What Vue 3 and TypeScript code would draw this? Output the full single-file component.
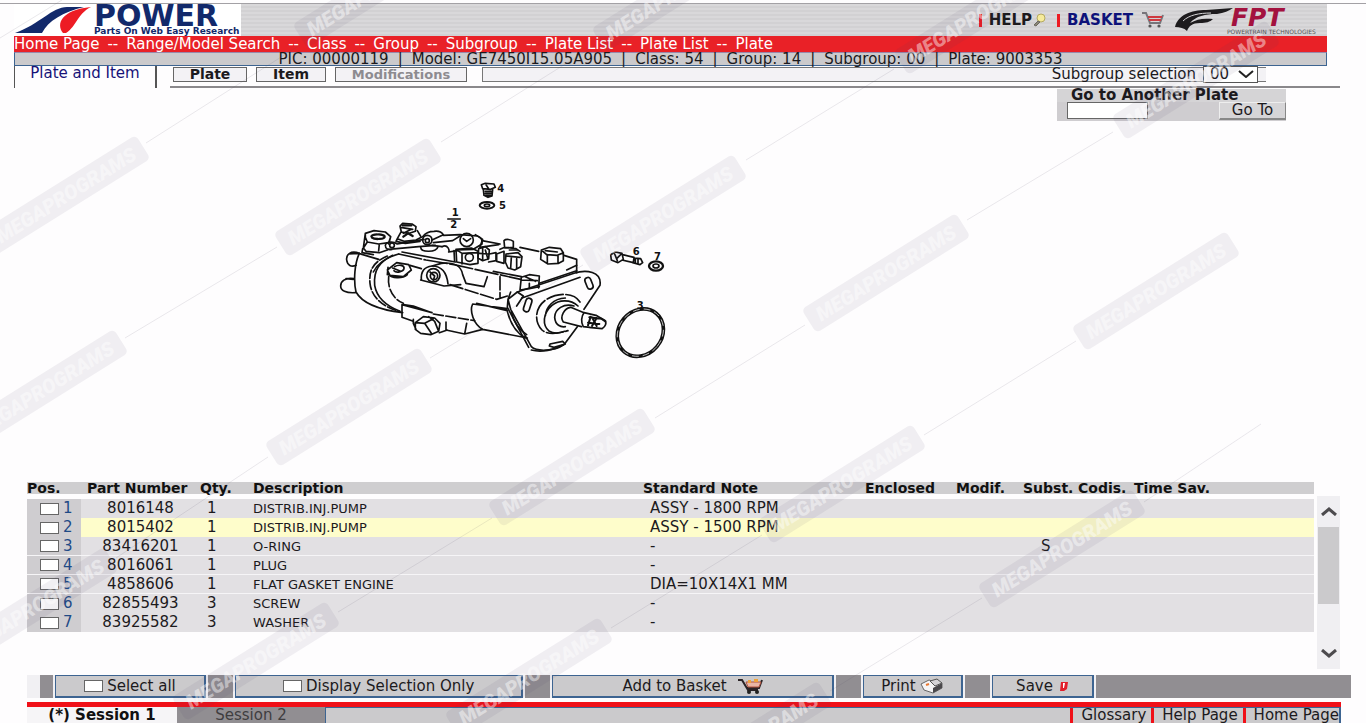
<script setup lang="ts">
import { ref } from 'vue'

interface Part {
  pos: number
  number: string
  qty: number
  description: string
  note: string
  subst: string
  selected: boolean
}

const crumbs = ['Home Page', 'Range/Model Search', 'Class', 'Group', 'Subgroup', 'Plate List', 'Plate List', 'Plate']
const info = ['PIC: 00000119', 'Model: GE7450I15.05A905', 'Class: 54', 'Group: 14', 'Subgroup: 00', 'Plate: 9003353']
const headings = ['Pos.', 'Part Number', 'Qty.', 'Description', 'Standard Note', 'Enclosed', 'Modif.', 'Subst.', 'Codis.', 'Time Sav.']

const parts = ref<Part[]>([
  { pos: 1, number: '8016148', qty: 1, description: 'DISTRIB.INJ.PUMP', note: 'ASSY - 1800 RPM', subst: '', selected: false },
  { pos: 2, number: '8015402', qty: 1, description: 'DISTRIB.INJ.PUMP', note: 'ASSY - 1500 RPM', subst: '', selected: false },
  { pos: 3, number: '83416201', qty: 1, description: 'O-RING', note: '-', subst: 'S', selected: false },
  { pos: 4, number: '8016061', qty: 1, description: 'PLUG', note: '-', subst: '', selected: false },
  { pos: 5, number: '4858606', qty: 1, description: 'FLAT GASKET ENGINE', note: 'DIA=10X14X1 MM', subst: '', selected: false },
  { pos: 6, number: '82855493', qty: 3, description: 'SCREW', note: '-', subst: '', selected: false },
  { pos: 7, number: '83925582', qty: 3, description: 'WASHER', note: '-', subst: '', selected: false },
])

const highlighted = ref(2)
const subgroup = ref('00')
const otherPlate = ref('')
const selectAll = ref(false)
const selectionOnly = ref(false)

function toggleAll() {
  parts.value.forEach((p) => (p.selected = selectAll.value))
}

const marks: [number, number][] = [
  [377, -12], [676, -8], [978, 15], [1196, 80],
  [66, 195], [358, 197], [663, 214], [886, 273], [1156, 291],
  [44, 389], [349, 407], [572, 467], [842, 484], [1062, 549],
  [34, 607], [256, 661], [529, 677], [748, 741],
]
const strings: [number, number, number, number][] = [
  [0, 38, 62, 0], [146, 143, 300, 45], [441, 142, 594, 46], [746, 160, 894, 69], [967, 220, 1113, 132],
  [125, 338, 277, 247], [430, 358, 583, 265], [655, 418, 805, 325], [924, 435, 1076, 341], [1144, 502, 1261, 424],
  [116, 558, 268, 457], [338, 612, 492, 518], [611, 628, 762, 535], [830, 691, 982, 598],
]
</script>

<template>
  <div class="page">
    <div class="topline"></div>
    <header class="head">
      <div class="banner">
        <div class="brand">
          <svg class="swoosh" viewBox="0 0 80 32" aria-hidden="true">
            <path d="M1 29C26 20 38 3 53 3h17C49 8 34 17 28 29z" fill="#12296b" />
            <path d="M49 29C42 20 47 6 77 3C63 10 63 22 52 29z" fill="#ed1c24" />
          </svg>
          <div class="wordmark">
            <strong>POWER</strong>
            <span>Parts On Web Easy Research</span>
          </div>
        </div>
        <nav class="quick">
          <a href="#" class="help">HELP</a>
          <svg class="bulb" viewBox="0 0 14 14" aria-hidden="true">
            <circle cx="9" cy="5" r="4" fill="#f6eb9b" stroke="#b5aa62" />
            <path d="M6 8L2 12l2 1 4-4z" fill="#8b8878" stroke="#6b6860" />
          </svg>
          <a href="#" class="basket">BASKET</a>
          <svg class="cart" viewBox="0 0 24 18" aria-hidden="true">
            <path d="M1 2h4l4 10h10l3-8" fill="none" stroke="#77757a" stroke-width="2" />
            <path d="M7 6h14M8 9h12" stroke="#cf3a40" stroke-width="2" />
            <circle cx="9" cy="15" r="1.6" fill="#555" /><circle cx="18" cy="15" r="1.6" fill="#555" />
          </svg>
          <svg class="fpt" viewBox="0 0 148 32" aria-hidden="true">
            <path d="M0 23C3 11 16 6 31 6l27-2c-4 3-9 5-16 6-12 0-21 2-27 9 7-4 13-5 23-4-3 3-7 4-13 4-8 0-11 3-13 8-3-3-7-4-12-4z" fill="#1d1b1d" />
            <path d="M8 17C14 11 24 9 36 9" fill="none" stroke="#d6d5d7" stroke-width="1" />
            <text x="56" y="22" class="fpt-name">FPT</text>
            <text x="52" y="30" class="fpt-sub">POWERTRAIN TECHNOLOGIES</text>
          </svg>
        </nav>
      </div>
      <nav class="crumbs">
        <template v-for="(c, i) in crumbs" :key="i"><span v-if="i">--</span><a href="#">{{ c }}</a></template>
      </nav>
      <div class="info">
        <template v-for="(t, i) in info" :key="t"><span v-if="i">|</span><b>{{ t }}</b></template>
      </div>
    </header>

    <div class="tools">
      <a href="#" class="tab">Plate and Item</a>
      <div class="strip">
        <button type="button" class="plate-btn">Plate</button>
        <button type="button" class="item-btn">Item</button>
        <button type="button" class="mod-btn" disabled>Modifications</button>
        <div class="sub">
          <label for="subgroup">Subgroup selection</label>
          <span class="picker">
            <select id="subgroup" v-model="subgroup"><option>00</option></select>
            <svg viewBox="0 0 16 8" aria-hidden="true"><path d="M1 1l7 6 7-6" fill="none" stroke="#222" stroke-width="2" /></svg>
          </span>
        </div>
      </div>
    </div>

    <main class="stage">
      <svg class="drawing" viewBox="0 0 1080 600" role="img" aria-label="Injection pump exploded view">
        <g fill="none" stroke="#111" stroke-width="5" stroke-linejoin="round" stroke-linecap="round">
          <!-- rear studs and flange -->
          <path d="M118 250C92 240 78 254 80 270s14 22 28 16M86 252l30-2 60 18" />
          <path d="M102 326C74 322 62 334 62 348s16 22 44 20M78 326l22 2" />
          <path d="M118 250C104 280 100 330 108 366c20 36 74 54 140 62" />
          <path d="M202 258C160 276 146 300 150 340c4 40 36 70 88 84" stroke-dasharray="26 7" />
          <path d="M218 256C178 276 160 300 164 346c6 36 36 62 76 78" />
          <path d="M236 252C200 262 172 282 160 306" />
          <path d="M206 320C202 356 220 388 250 400" stroke-dasharray="30 8" />
          <!-- left cap nut -->
          <path d="M136 190l26-8 34 4 16 14-6 18-30 4-34-6-6-14zM136 190l-6 44M212 200l-6 22M142 216l-12 18 8 10 40 4 24-8M128 236l-2 12 34 6M178 222l-2 20" />
          <ellipse cx="174" cy="200" rx="20" ry="7" stroke-dasharray="18 5" stroke-width="7" />
          <!-- top screw -->
          <path d="M240 168l8-8 28 2 12 8-2 14-18 6-24-4zM244 184l-12 22 20 8 36-4 16-8-12-20M242 172l36 6M250 190l24-12M232 206l-4 8 28 6 44-6" />
          <path d="M248 166h26M250 200l14-10 14 8" stroke-width="7" />
          <!-- lever -->
          <path d="M196 226c2-10 22-14 36-4l80-14M206 238l90-8 50-4M196 226c0 12 8 14 20 12" />
          <circle cx="216" cy="226" r="7" /><circle cx="322" cy="210" r="14" /><circle cx="322" cy="212" r="6" />
          <path d="M308 200c10-14 20-16 34-16 14-2 24 4 28 10l-34 16M340 218l58-6 22-14M336 226l30 4" />
          <path d="M302 232c2 16 46 16 52-2M366 230c18-10 24 14 20 16M386 246l26-4" />
          <path d="M370 196l50-2 52 4c12 4 16 14 14 24l-26 16-48 2" />
          <circle cx="440" cy="210" r="20" /><path d="M430 206l10 8 12-8M466 194l22 14-8 22" />
          <!-- body top edge -->
          <path d="M486 212l54 10M480 232l56-8M600 232l56 12M732 256l38 12v40" />
          <path d="M236 252l82 18 84 14 200 44" stroke-dasharray="70 8" />
          <path d="M246 246l160 30M404 276l-2-34M520 304l84 16" />
          <!-- manifold blocks -->
          <path d="M408 238l46-4 20 10v36l-24 4-40-8zM408 238l18 12 46-2M426 250v32" />
          <circle cx="448" cy="262" r="12" /><path d="M476 236l20-6 12 10-2 26-18 6-14-8zM478 250l26 2M488 234v36M508 252l20-4v24l-22 4M496 240l8 28" />
          <path d="M530 252l22-8v36l-22-6zM552 212c6-6 20-4 28 2v18l-26 2zM540 238l14-6 34 4 12 8" />
          <path d="M558 252l36-4 12 12-4 30-18 10-20-6-8-18zM560 258l40 4M574 262l-2 32M590 266v28M568 240h24" />
          <!-- right cap nut -->
          <path d="M664 240l24-8 34 4 8 12-18 8-32-2zM664 240l-2 28 22 14 32-2 14-8v-24M682 254v26M714 256v24" />
          <path d="M676 242l36 4" />
          <!-- side lugs -->
          <path d="M202 300l28-22 36 6 8 16-24 20-40-4zM204 292l-2 22M218 294l24 10M224 290c12-8 30-4 28 6s-24 14-30 6M206 314c8 10 40 14 56 0M270 286l34 10" />
          <path d="M304 330c-2-28 12-40 32-42l28-8c34-4 60 6 64 34l10 26 54 10 10-30" />
          <path d="M302 330l70 18 50-4M336 288c26 0 44 16 48 54" /><circle cx="340" cy="316" r="20" /><circle cx="342" cy="318" r="11" /><path d="M330 306l14 12-4 14" />
          <path d="M540 320v60M390 344l140 44 32-10" stroke-dasharray="40 8" />
          <!-- flange bolt -->
          <path d="M604 322l24-8 30 4-2 36M604 322l-4 38 28-4 30-6M604 330l48 2M616 320l30 14M628 340v14" />
          <path d="M740 300l30-14M658 340l112-38" />
          <!-- front flange -->
          <path d="M564 388l28-22 170-56c36-12 84-6 78 36l-48 72M564 388l8 30 62 112c16 16 70 14 98-6l40-54M564 388l-2 24 64 120M572 366l-8 22M606 384l174-62" />
          <path d="M592 366l18 12-20 30M634 540c30 8 70 0 96-16" />
          <rect x="614" y="384" width="18" height="42" rx="9" transform="rotate(18 623 405)" />
          <rect x="798" y="322" width="18" height="36" rx="9" transform="rotate(-22 807 340)" />
          <path d="M690 522l38-8 8 8-34 10-14-4z" />
          <!-- shaft -->
          <path d="M780 396c-20-32-70-26-100-8-34 22-40 64-14 92 20 18 58 8 78 2" stroke-dasharray="50 8" />
          <path d="M774 408c-24-22-58-18-78-2-28 24-30 60-8 78 14 8 30 6 46 0M736 384c-36 2-58 26-60 54M762 408c-30-10-58 10-58 34 2 24 18 30 32 28" />
          <path d="M792 428l-40-16c-18 2-34 28-22 44l54 14M792 428c-8 10-10 30-2 42l20 2M792 428l36 8 28 16c4 10 0 18-10 24l-40-4" />
          <path d="M808 442l36 4 12 8M804 458l34 4M816 442l14 26M830 444l-14 24M804 466l8-26" stroke-width="6" />
          <!-- lower body -->
          <path d="M246 404l90 24M246 404v38l34 12M250 404l30 4 56 20" />
          <path d="M340 432l124 20" stroke-dasharray="30 8" />
          <path d="M562 416l-104-14c-10 20 2 60 30 76l134 26M470 400l92 22M488 478l-54 14-56-12M378 456v24M440 460l-6 32M358 488l24-8M562 424c10 40 26 64 54 80M574 426c8 32 24 54 46 68" />
          <path d="M286 458l24-18 34 4 16 16-4 24-24 10-30-4-16-12zM286 458l28 2 20 30M314 460l26-14M326 440l18 14 12 30M280 448v12l8 18" />
          <!-- loose hardware -->
          <path d="M484 44l12-4 26 2 4 10-14 6-24-2zM490 58l2 18 12 6 12-4 2-20M496 64h18M496 70h18M496 76h16M498 44l8 12" />
          <ellipse cx="501" cy="106" rx="22" ry="10" stroke-width="6" /><ellipse cx="501" cy="106" rx="8" ry="4" />
          <path d="M872 254l14-8 20 4 4 18-16 10-20-8zM884 252l8 20M904 252l-14 14M908 254l34 8-2 16-34-8M942 264l20 2 6 12-8 6-22-6M946 266v12M954 268v12" />
          <ellipse cx="1008" cy="288" rx="21" ry="14" stroke-width="7" /><ellipse cx="1008" cy="288" rx="9" ry="6" />
          <ellipse cx="961" cy="488" rx="65" ry="75" transform="rotate(40 961 488)" stroke-width="11" />
          <ellipse cx="961" cy="488" rx="65" ry="75" transform="rotate(40 961 488)" stroke="#fff" stroke-width="2" stroke-dasharray="18 14" />
          <path d="M383 147h38" stroke-width="4" />
        </g>
        <g class="callouts">
          <text x="395" y="137">1</text><text x="391" y="174">2</text>
          <text x="532" y="65">4</text><text x="537" y="118">5</text>
          <text x="938" y="256">6</text><text x="1002" y="271">7</text><text x="950" y="416">3</text>
        </g>
      </svg>
      <form class="goto" @submit.prevent>
        <label for="other-plate">Go to Another Plate</label>
        <div class="goto-row">
          <input id="other-plate" v-model="otherPlate" type="text" />
          <button type="submit">Go To</button>
        </div>
      </form>
    </main>

    <section class="list">
      <table>
        <colgroup>
          <col class="c-pos" /><col class="c-num" /><col class="c-qty" /><col class="c-desc" /><col class="c-note" />
          <col class="c-enc" /><col class="c-mod" /><col class="c-sub" /><col class="c-cod" /><col class="c-time" />
        </colgroup>
        <thead>
          <tr><th v-for="h in headings" :key="h" scope="col">{{ h }}</th></tr>
        </thead>
        <tbody>
          <tr v-for="p in parts" :key="p.pos" :class="{ lit: p.pos === highlighted, ruled: p.pos > 2 && p.pos < 6 }">
            <td class="pos">
              <label><input v-model="p.selected" type="checkbox" />{{ p.pos }}</label>
            </td>
            <td class="num">{{ p.number }}</td>
            <td class="qty">{{ p.qty }}</td>
            <td class="desc">{{ p.description }}</td>
            <td class="note">{{ p.note }}</td>
            <td></td>
            <td></td>
            <td class="subst">{{ p.subst }}</td>
            <td></td>
            <td></td>
          </tr>
        </tbody>
      </table>
      <div class="scroll">
        <button type="button" aria-label="Scroll up">
          <svg viewBox="0 0 16 9" aria-hidden="true"><path d="M1 8l7-6 7 6" /></svg>
        </button>
        <div class="track"><div class="thumb"></div></div>
        <button type="button" aria-label="Scroll down">
          <svg viewBox="0 0 16 9" aria-hidden="true"><path d="M1 1l7 6 7-6" /></svg>
        </button>
      </div>
    </section>

    <section class="actions">
      <i class="block first"></i>
      <label class="act w-all"><input v-model="selectAll" type="checkbox" @change="toggleAll" />Select all</label>
      <i class="block"></i>
      <label class="act w-only"><input v-model="selectionOnly" type="checkbox" />Display Selection Only</label>
      <i class="block"></i>
      <button type="button" class="act w-add">
        Add to Basket
        <svg class="basket-icon" viewBox="0 0 26 18" aria-hidden="true">
          <path d="M1 3h4l6 10h10M10 11h12l3-8" fill="none" stroke="#2a2326" stroke-width="2" />
          <path d="M9 5h15l-2 5H11z" fill="#e9b5a5" stroke="#b0523f" />
          <path d="M11 3h3v3h-3zM17 2h4v3h-4z" fill="#f0a33a" />
          <circle cx="12" cy="15" r="2" fill="#222" /><circle cx="20" cy="15" r="2" fill="#222" />
        </svg>
      </button>
      <i class="block"></i>
      <button type="button" class="act w-print">
        Print
        <svg class="print-icon" viewBox="0 0 24 16" aria-hidden="true">
          <path d="M1 6l8-4 6 2 7 1v5l-9 5-9-3z" fill="#f5f4f5" stroke="#666" />
          <path d="M13 10l9-5v5l-9 5z" fill="#4a484b" />
          <path d="M10 3l7-2 5 4-7 3z" fill="#d5d3d6" stroke="#555" />
          <path d="M6 7l3-1" stroke="#e87832" stroke-width="2" />
        </svg>
      </button>
      <i class="block"></i>
      <button type="button" class="act w-save">
        Save
        <svg class="save-icon" viewBox="0 0 10 11" aria-hidden="true">
          <path d="M2 1h7L8 8 5 10H1z" fill="#e21f2b" /><path d="M4 2h2L5 7H4z" fill="#fff" />
        </svg>
      </button>
      <i class="block last"></i>
    </section>

    <footer class="foot">
      <button type="button" class="session on">(*) Session 1</button>
      <button type="button" class="session">Session 2</button>
      <nav class="links">
        <a href="#">Glossary</a><a href="#">Help Page</a><a href="#">Home Page</a>
      </nav>
    </footer>

    <svg class="marks" viewBox="0 0 1366 723" preserveAspectRatio="xMinYMin slice" aria-hidden="true">
      <line v-for="(s, i) in strings" :key="'s' + i" :x1="s[0]" :y1="s[1]" :x2="s[2]" :y2="s[3]" />
      <g v-for="(m, i) in marks" :key="i" :transform="`translate(${m[0]} ${m[1]}) rotate(-32)`">
        <rect x="-91" y="-14" width="182" height="28" rx="5" />
        <text x="0" y="7" text-anchor="middle">MEGAPROGRAMS</text>
      </g>
    </svg>
  </div>
</template>

<style>
body {
  margin: 0;
  background: #fefdfe;
}
</style>

<style scoped>
.page {
  position: relative;
  display: flex;
  flex-direction: column;
  min-height: 100vh;
  overflow: hidden;
  color: #1c1a1d;
  font: 15px/15px "DejaVu Sans", Verdana, sans-serif;
}
.page * {
  box-sizing: border-box;
}
a {
  color: inherit;
  text-decoration: none;
}
button,
select,
input {
  margin: 0;
  padding: 0;
  border-radius: 0;
  color: inherit;
  font: inherit;
}
.topline {
  height: 4px;
  border-bottom: 1px solid #a3a1a5;
}
.head {
  margin: 0 39px 0 14px;
}
.banner {
  display: flex;
  justify-content: space-between;
  height: 32px;
  background: repeating-linear-gradient(#d9d8da 0 2px, #d2d1d3 2px 4px);
}
.brand {
  display: flex;
  width: 227px;
  background: #fff;
}
.swoosh {
  width: 80px;
  height: 32px;
}
.wordmark {
  display: flex;
  flex-direction: column;
  color: #12296b;
  white-space: nowrap;
}
.wordmark strong {
  font-size: 30px;
  line-height: 23px;
}
.wordmark span {
  font-size: 9px;
  line-height: 9px;
  font-weight: bold;
}
.quick {
  display: flex;
  align-items: center;
  padding-right: 4px;
  font-weight: bold;
}
.help,
.basket {
  padding-left: 7px;
  border-left: 3px solid #ed1c24;
  line-height: 13px;
}
.basket {
  color: #0d1279;
}
.bulb {
  width: 14px;
  height: 14px;
  margin-right: 11px;
}
.cart {
  width: 24px;
  height: 18px;
  margin: 0 10px 0 8px;
}
.fpt {
  width: 148px;
  height: 32px;
}
.fpt-name {
  fill: #a3123f;
  font-size: 25px;
  font-style: italic;
}
.fpt-sub {
  fill: #555;
  font-size: 6px;
  font-weight: normal;
}
.crumbs {
  display: flex;
  gap: 8px;
  height: 16px;
  background: #e92127;
  color: #fff;
  line-height: 16px;
  white-space: nowrap;
}
.info {
  display: flex;
  justify-content: center;
  gap: 9px;
  height: 14px;
  border: 1px solid #3d6491;
  border-top-color: #98a;
  background: #cbcacc;
  line-height: 12px;
  white-space: nowrap;
}
.info b {
  font-weight: normal;
}
.tools {
  display: flex;
  gap: 13px;
  height: 22px;
  margin: 0 26px 0 14px;
}
.tab {
  width: 143px;
  border: solid #555;
  border-width: 0 2px 0 1px;
  color: #171278;
  text-align: center;
}
.strip {
  display: flex;
  flex: 1;
  align-items: flex-start;
  gap: 9px;
  padding: 1px 74px 0 3px;
  border-bottom: 2px solid #8a888b;
}
.strip button {
  height: 15px;
  border: 1px solid #666;
  background: #f3f2f5;
  font-size: 14px;
  font-weight: bold;
  line-height: 13px;
}
.plate-btn {
  width: 74px;
}
.item-btn {
  width: 70px;
}
.strip .mod-btn {
  width: 132px;
  color: #8d8b90;
  font-size: 13px;
}
.sub {
  display: flex;
  flex: 1;
  align-items: center;
  justify-content: flex-end;
  gap: 7px;
  height: 15px;
  margin-left: 6px;
  padding-right: 8px;
  border: 1px solid #777;
  border-right: 0;
  background: #f3f2f5;
}
.picker {
  position: relative;
}
.picker select {
  display: block;
  width: 55px;
  height: 17px;
  padding-left: 6px;
  border: 1px solid #555;
  appearance: none;
  background: #fff;
}
.picker svg {
  position: absolute;
  top: 4px;
  right: 4px;
  width: 16px;
  height: 8px;
  pointer-events: none;
}
.stage {
  display: flex;
  flex: 1;
  align-items: flex-start;
  justify-content: space-between;
  padding: 1px 80px 0 320px;
}
.drawing {
  width: 360px;
  height: 200px;
  margin-top: 81px;
}
.callouts {
  fill: #111;
  font-size: 30px;
  font-weight: bold;
}
.goto {
  width: 229px;
  background: #cfcdd0;
}
.goto label {
  display: block;
  height: 13px;
  padding-left: 14px;
  background: #d5d4d6;
  font-weight: bold;
  line-height: 13px;
  white-space: nowrap;
}
.goto-row {
  display: flex;
  justify-content: space-between;
  height: 19px;
  padding-left: 10px;
}
.goto input {
  width: 81px;
  height: 17px;
  border: 1px solid #666;
  background: #fff;
}
.goto button {
  width: 67px;
  height: 18px;
  border: solid;
  border-width: 1px 1px 2px;
  border-color: #eee #888 #888 #eee;
  background: #d6d5d7;
}
.list {
  display: flex;
  gap: 3px;
  margin: 0 26px 0 27px;
}
table {
  flex: 1;
  align-self: flex-start;
  width: 100%;
  table-layout: fixed;
  border-spacing: 0;
}
.c-pos { width: 54px; }
.c-num { width: 119px; }
.c-qty { width: 53px; }
.c-desc { width: 390px; }
.c-note { width: 222px; }
.c-enc { width: 91px; }
.c-mod { width: 67px; }
.c-sub { width: 55px; }
.c-cod { width: 56px; }
.c-time { width: 180px; }
th,
td {
  padding: 0;
  white-space: nowrap;
  text-align: left;
}
th {
  height: 17px;
  border-bottom: 5px solid #fefdfe;
  background: #cfced0;
  color: #111;
  font-size: 14px;
  line-height: 12px;
}
th:nth-child(2) {
  padding-left: 6px;
}
td {
  height: 19px;
  background: #e2e0e3;
  line-height: 17px;
}
.lit td {
  background: #fefdcb;
}
.ruled td {
  border-bottom: 1px solid #f6f5f7;
}
td.pos,
.lit td.pos {
  padding-left: 13px;
  background: #cfcdd0;
  color: #1f4a86;
}
.pos label {
  display: flex;
  align-items: center;
  gap: 4px;
}
input[type="checkbox"] {
  width: 19px;
  height: 12px;
  border: 1px solid #666;
  appearance: none;
  background: #fff;
}
input[type="checkbox"]:checked {
  background: #1f4a86;
}
td.num {
  text-align: center;
}
td.qty {
  padding-left: 7px;
}
td.desc {
  font-size: 13px;
}
td.note {
  padding-left: 7px;
}
td.subst {
  padding-left: 18px;
}
.scroll {
  display: flex;
  flex-direction: column;
  width: 23px;
  height: 173px;
  margin-top: 14px;
  background: #f0eff2;
}
.scroll button {
  height: 31px;
  border: 0;
  background: none;
}
.scroll svg {
  width: 16px;
  height: 9px;
}
.scroll path {
  fill: none;
  stroke: #4d4b4e;
  stroke-width: 3;
}
.track {
  flex: 1;
  padding: 0 1px;
}
.thumb {
  height: 77px;
  background: #cbcacc;
}
.actions {
  display: flex;
  gap: 2px;
  height: 23px;
  margin: 6px 15px 4px 27px;
  padding-left: 13px;
  background: #f1f0f3;
}
.block {
  flex: 25 1 0;
  background: #918e92;
}
.block.first {
  flex-grow: 13;
}
.block.last {
  flex-grow: 258;
}
.act {
  display: flex;
  align-items: center;
  justify-content: center;
  border: solid #3d6491;
  border-width: 1px 2px 2px 1px;
  background: #cbcacc;
  white-space: nowrap;
}
.act input {
  margin-right: 4px;
}
.w-all { flex: 150 1 0; }
.w-only { flex: 289 1 0; }
.w-add { flex: 282 1 0; }
.w-print { flex: 99 1 0; }
.w-save { flex: 100 1 0; }
.basket-icon {
  width: 26px;
  height: 18px;
  margin-left: 10px;
}
.print-icon {
  width: 24px;
  height: 16px;
  margin-left: 4px;
}
.save-icon {
  width: 10px;
  height: 11px;
  margin-left: 6px;
}
.foot {
  display: flex;
  height: 21px;
  margin: 0 25px 0 27px;
  border-top: 5px solid #f01018;
}
.session {
  width: 148px;
  border: 0;
  background: #918e92;
  color: #3f3d40;
}
.session.on {
  width: 150px;
  background: #f6f5f7;
  color: #111;
  font-weight: bold;
}
.links {
  display: flex;
  flex: 1;
  align-items: center;
  justify-content: flex-end;
  gap: 5px;
  border: 1px solid #3d6491;
  border-width: 1px 2px 0 1px;
  background: #cbcacc;
}
.links a {
  padding-left: 8px;
  border-left: 3px solid #f01018;
}
.marks {
  position: absolute;
  inset: 0;
  width: 100%;
  height: 100%;
  pointer-events: none;
}
.marks line {
  stroke: rgba(80, 70, 100, 0.12);
}
.marks rect {
  fill: rgba(80, 70, 100, 0.08);
}
.marks text {
  fill: rgba(255, 255, 255, 0.45);
  font: italic 900 20px Roboto, sans-serif;
}
</style>
